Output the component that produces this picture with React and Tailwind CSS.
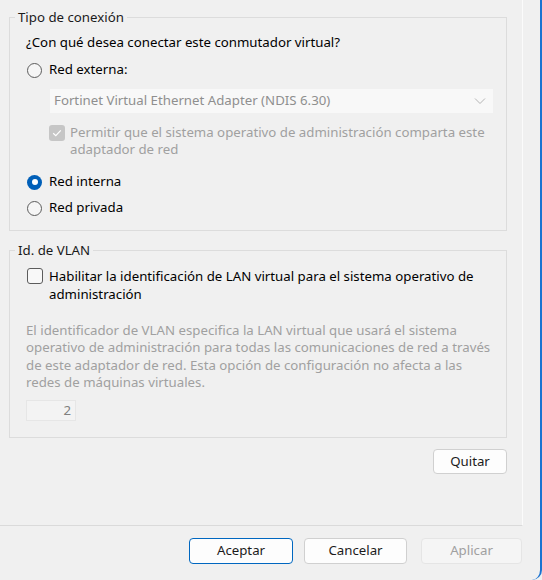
const Radio = ({ checked }) =>
  checked ? (
    <span className="flex w-[15px] h-[15px] shrink-0 items-center justify-center rounded-full bg-[#005fb8]">
      <span className="w-[6px] h-[6px] rounded-full bg-white" />
    </span>
  ) : (
    <span className="w-[15px] h-[15px] shrink-0 rounded-full border border-[#5c5c5c] bg-[#f6f6f6]" />
  );

const GroupBox = ({ title, className, children }) => (
  <fieldset className={'border border-[#dcdcdc] w-[498px] ' + className}>
    <legend className="ml-[5px] px-[3px] leading-[20px] text-[#1b1b1b]">{title}</legend>
    {children}
  </fieldset>
);

export default function App() {
  return (
    <div className="w-[542px] h-[580px] bg-[#f0f0f0] font-['Noto_Sans'] text-[13.25px] text-black overflow-hidden">
      <div className="w-[542px] h-[580px] border-r-2 border-[#1a73d1] rounded-br-[10px] flex flex-col">
        {/* panel */}
        <div className="w-[523px] h-[526px] border-r border-b border-r-[#fbfbfb] border-b-[#dadada] pl-[9px] pt-[7px] flex flex-col">
          <GroupBox title="Tipo de conexión" className="pb-[12px]">
            <div className="pl-[16px] pt-[5px] leading-[20px]">¿Con qué desea conectar este conmutador virtual?</div>
            <div className="flex items-center gap-[7px] pl-[17px] mt-[8px] h-[20px]">
              <Radio />
              <span>Red externa:</span>
            </div>
            <div className="ml-[40px] mt-[9px] w-[443px] h-[24px] bg-[#f8f8f8] flex items-center justify-between pl-[4px] pr-[7px] text-[#8f8f8f]">
              <span>Fortinet Virtual Ethernet Adapter (NDIS 6.30)</span>
              <svg width="12" height="8" viewBox="0 0 12 8" fill="none" stroke="#b4b4b4" strokeWidth="1">
                <path d="M1 1.5 L6 6.5 L11 1.5" />
              </svg>
            </div>
            <div className="flex gap-[5px] ml-[39px] mt-[11px] leading-[17px] text-[#a0a0a0]">
              <span className="mt-[1px] flex w-[16px] h-[16px] shrink-0 items-center justify-center rounded-[3px] bg-[#c6c6c6]">
                <svg width="10" height="8" viewBox="0 0 10 8" fill="none" stroke="#fff" strokeWidth="1.2">
                  <path d="M1.2 4.2 L3.8 6.6 L8.8 1.4" />
                </svg>
              </span>
              <span>
                Permitir que el sistema operativo de administración comparta este
                <br />
                adaptador de red
              </span>
            </div>
            <div className="flex items-center gap-[7px] pl-[17px] mt-[14px] h-[20px]">
              <Radio checked />
              <span>Red interna</span>
            </div>
            <div className="flex items-center gap-[7px] pl-[17px] mt-[6px] h-[20px]">
              <Radio />
              <span>Red privada</span>
            </div>
          </GroupBox>

          <GroupBox title="Id. de VLAN" className="mt-[9px] pb-[16px]">
            <div className="flex gap-[6px] pl-[17px] mt-[7px] leading-[18px]">
              <span className="mt-[1px] w-[16px] h-[16px] shrink-0 rounded-[3px] border border-[#5c5c5c] bg-[#f8f8f8]" />
              <span>
                Habilitar la identificación de LAN virtual para el sistema operativo de
                <br />
                administración
              </span>
            </div>
            <p className="pl-[16px] mt-[19px] leading-[17.3px] text-[#a0a0a0]">
              El identificador de VLAN especifica la LAN virtual que usará el sistema
              <br />
              operativo de administración para todas las comunicaciones de red a través
              <br />
              de este adaptador de red. Esta opción de configuración no afecta a las
              <br />
              redes de máquinas virtuales.
            </p>
            <div className="ml-[16px] mt-[9px] w-[50px] h-[21px] border border-[#e6e6e6] bg-[#f3f3f3] flex items-center justify-end pr-[4px] text-[#808080]">
              2
            </div>
          </GroupBox>

          <div className="flex justify-end w-[498px] mt-[11px]">
            <button className="w-[74px] h-[25px] rounded-[4px] border border-[#d0d0d0] bg-[#fdfdfd] text-[#1b1b1b]">
              Quitar
            </button>
          </div>
        </div>

        {/* bottom buttons */}
        <div className="flex gap-[11px] pl-[189px] mt-[12px]">
          <button className="w-[104px] h-[26px] rounded-[4px] border border-[#0067c0] bg-[#fdfdfd] text-[#1b1b1b]">
            Aceptar
          </button>
          <button className="w-[103px] h-[26px] rounded-[4px] border border-[#d0d0d0] bg-[#fdfdfd] text-[#1b1b1b]">
            Cancelar
          </button>
          <button className="w-[101px] h-[26px] ml-[3px] rounded-[4px] border border-[#e5e5e5] bg-[#f5f5f5] text-[#a0a0a0]">
            Aplicar
          </button>
        </div>
      </div>
    </div>
  );
}
